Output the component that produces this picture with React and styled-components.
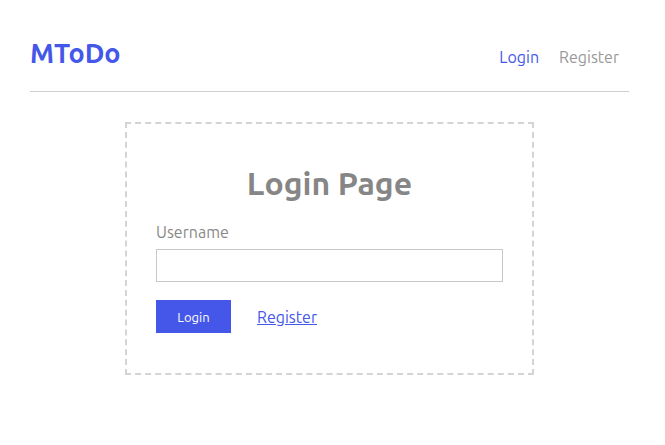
import React, { useState } from "react";
import styled, { createGlobalStyle } from "styled-components";

const GlobalStyle = createGlobalStyle`
  body {
    margin: 0;
    background: #fff;
    font-family: "Ubuntu", "Lato", "Open Sans", sans-serif;
  }
  * {
    box-sizing: border-box;
  }
`;

const Page = styled.div`
  width: 599px;
  margin-left: 30px;
`;

const Header = styled.header`
  display: flex;
  align-items: center;
  justify-content: space-between;
  height: 92px;
  padding-top: 22px;
  border-bottom: 1px solid #cfcfcf;
`;

const Logo = styled.div`
  font-size: 27px;
  font-weight: bold;
  color: #4457e9;
  margin-top: -8px;
`;

const Nav = styled.nav`
  display: flex;
`;

const NavLink = styled.a`
  padding: 0 10px;
  font-size: 16px;
  color: ${(p) => (p.active ? "#4457e9" : "#999")};
  text-decoration: none;
  cursor: pointer;
`;

const Card = styled.div`
  width: 409px;
  margin: 30px auto 0;
  padding: 41px 29px 40px;
  border: 2px dashed #d4d4d4;
`;

const Title = styled.h1`
  margin: 0 0 22px;
  text-align: center;
  font-size: 32px;
  font-weight: bold;
  color: #868686;
`;

const Label = styled.label`
  display: block;
  font-size: 16px;
  color: #888;
  margin-bottom: 8px;
`;

const Input = styled.input`
  display: block;
  width: 100%;
  height: 33px;
  border: 1px solid #c8c8c8;
  padding: 0 8px;
  font-size: 15px;
  outline: none;
`;

const Actions = styled.div`
  display: flex;
  align-items: center;
  gap: 26px;
  margin-top: 18px;
`;

const Button = styled.button`
  width: 75px;
  height: 33px;
  border: none;
  background: #4457e9;
  color: #fff;
  font-family: inherit;
  font-size: 13px;
  cursor: pointer;
`;

const TextLink = styled.a`
  font-size: 16px;
  color: #4457e9;
  text-decoration: underline;
  cursor: pointer;
`;

export default function App() {
  const [username, setUsername] = useState("");
  return (
    <>
      <GlobalStyle />
      <Page>
        <Header>
          <Logo>MToDo</Logo>
          <Nav>
            <NavLink active>Login</NavLink>
            <NavLink>Register</NavLink>
          </Nav>
        </Header>
        <Card>
          <Title>Login Page</Title>
          <Label htmlFor="username">Username</Label>
          <Input
            id="username"
            value={username}
            onChange={(e) => setUsername(e.target.value)}
          />
          <Actions>
            <Button>Login</Button>
            <TextLink>Register</TextLink>
          </Actions>
        </Card>
      </Page>
    </>
  );
}
